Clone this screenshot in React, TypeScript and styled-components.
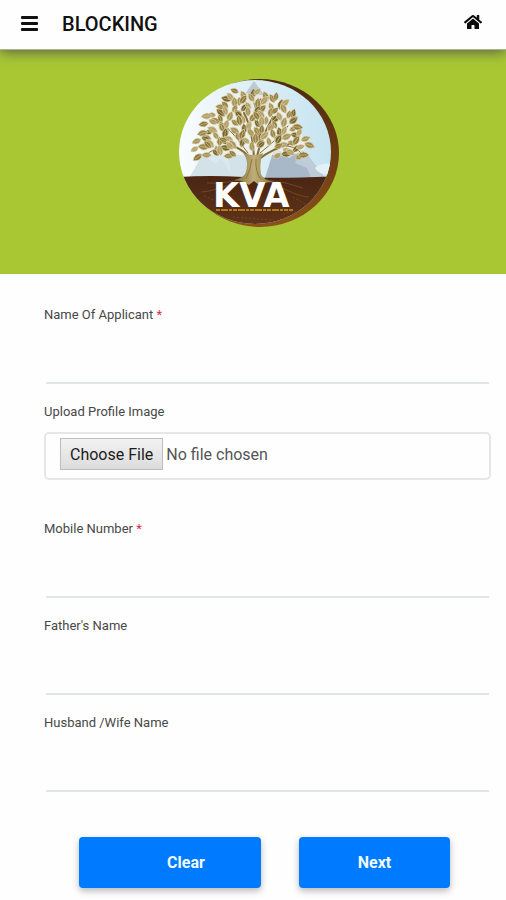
import React from 'react';
import styled, { createGlobalStyle } from 'styled-components';
import { FaHome } from 'react-icons/fa';

const GlobalStyle = createGlobalStyle`
  *, *::before, *::after { box-sizing: border-box; }
  body {
    margin: 0;
    background: #fefefe;
    color: #444;
    font-family: Roboto, "Liberation Sans", sans-serif;
  }
  button, input { font-family: inherit; }
`;

const Header = styled.header`
  position: relative;
  display: flex;
  align-items: center;
  height: 50px;
  padding: 0 24px 2px 20px;
  background: #fefefe;
  border-bottom: 1px solid #a9b58c;
  box-shadow: 0 2px 12px rgba(60, 60, 80, 0.75);
`;

const IconButton = styled.button`
  display: flex;
  padding: 0;
  border: 0;
  background: none;
  color: #111;
  cursor: pointer;
`;

const HomeLink = styled.a`
  display: flex;
  margin-left: auto;
  padding-bottom: 4px;
  color: #0b0b0b;
`;

const Title = styled.h1`
  margin: 0 0 0 23px;
  font-size: 20px;
  line-height: 24px;
  font-weight: 500;
  color: #111;
`;

const Hero = styled.section`
  display: flex;
  justify-content: center;
  padding: 28px 0 45px 12px;
  background: #a9c733;
`;

const Form = styled.form`
  padding: 31px 15px 10px 44px;
`;

const Field = styled.div<{ $gap?: number }>`
  display: flex;
  flex-direction: column;
  margin-bottom: ${({ $gap = 18 }) => $gap}px;
`;

const Label = styled.label`
  font-size: 13px;
  line-height: 20px;
  color: #484848;
`;

const Required = styled.span`
  color: #d9304a;
`;

const TextInput = styled.input`
  height: 59px;
  margin: 0 2px;
  padding: 20px 10px 0;
  border: 0;
  border-bottom: 2px solid #e2e5e7;
  background: transparent;
  font-size: 16px;
  color: #495057;
  outline: none;
  &:focus { border-bottom-color: #007bff; }
`;

const FileInput = styled.input`
  width: 100%;
  height: 48px;
  margin-top: 10px;
  padding: 4px 14px 8px;
  border: 2px solid #e4e6e7;
  border-radius: 5px;
  font-size: 16px;
  line-height: 30px;
  color: #555;

  &::file-selector-button {
    height: 32px;
    margin: 0 3px 0 0;
    padding: 0 9px;
    border: 1px solid #bdbdbd;
    border-radius: 0;
    background: linear-gradient(#f2f2f2, #dcdcdc);
    font-family: inherit;
    font-size: 16px;
    color: #1c1c1c;
  }
`;

const Actions = styled.div`
  display: grid;
  grid-template-columns: 182fr 151fr;
  gap: 38px;
  padding: 27px 41px 0 35px;
`;

const ActionButton = styled.button<{ $inset?: number }>`
  height: 51px;
  padding: 0 0 0 ${({ $inset = 0 }) => $inset}px;
  border: 0;
  border-radius: 4px;
  background: #007bff;
  box-shadow: 0 3px 7px rgba(0, 0, 0, 0.28);
  color: #eefaff;
  font-size: 16px;
  font-weight: 700;
  cursor: pointer;
`;

const MenuIcon = () => (
  <svg width="19" height="18" viewBox="0 0 19 18" aria-hidden="true">
    <g fill="currentColor">
      <rect x="1" y="1" width="17" height="3" rx="1" />
      <rect x="1" y="7" width="17" height="3" rx="1" />
      <rect x="1" y="13" width="17" height="3" rx="1" />
    </g>
  </svg>
);

type Leaf = { x: number; y: number; angle: number; size: number; color: string };

const leafColors = ['#8f7a3a', '#a8945a', '#786428', '#b3a068', '#9a8648'];

// Each row of the canopy: height, left end and right end.
const canopyRows: [number, number, number][] = [
  [16, 58, 86],
  [22, 46, 99],
  [28, 41, 107],
  [34, 33, 112],
  [40, 29, 116],
  [46, 27, 119],
  [52, 28, 120],
  [58, 23, 121],
  [64, 18, 126],
  [70, 17, 129],
  [76, 21, 126],
];

const leaves: Leaf[] = canopyRows.flatMap(([y, left, right], row) => {
  const count = Math.round((right - left) / 7);
  return Array.from({ length: count + 1 }, (_, i) => {
    const seed = row * 17 + i * 11;
    const x = left + ((right - left) * i) / count + ((seed * 7) % 5) - 2;
    const jitterY = y + ((seed * 3) % 7) - 3;
    const radial = (Math.atan2(jitterY - 88, x - 75) * 180) / Math.PI;
    return {
      x,
      y: jitterY,
      angle: radial + ((seed * 13) % 110) - 55,
      size: 1 + (seed % 3) * 0.12,
      color: leafColors[seed % leafColors.length],
    };
  });
}).filter((leaf) => leaf.y < 70 || Math.abs(leaf.x - 75) > 20);

const Logo = () => (
  <svg width="162" height="151" viewBox="-1 0 162 151" role="img" aria-label="KVA">
    <defs>
      <clipPath id="disc">
        <ellipse cx="76" cy="74" rx="76" ry="72" />
      </clipPath>
      <linearGradient id="rim" x1="0" y1="0" x2="0" y2="1">
        <stop offset="0" stopColor="#4a2a10" />
        <stop offset="0.5" stopColor="#6d3c12" />
        <stop offset="1" stopColor="#8a5218" />
      </linearGradient>
      <linearGradient id="sky" x1="0" y1="0" x2="1" y2="0">
        <stop offset="0" stopColor="#fbfdfe" />
        <stop offset="0.35" stopColor="#e3f1f7" />
        <stop offset="1" stopColor="#c3e3f0" />
      </linearGradient>
      <linearGradient id="soil" x1="0" y1="0" x2="0" y2="1">
        <stop offset="0" stopColor="#4a2613" />
        <stop offset="1" stopColor="#62351a" />
      </linearGradient>
      <linearGradient id="trunk" x1="0" y1="0" x2="1" y2="0">
        <stop offset="0" stopColor="#7d6b36" />
        <stop offset="0.5" stopColor="#bfae78" />
        <stop offset="1" stopColor="#85723b" />
      </linearGradient>
    </defs>
    <ellipse cx="81" cy="75" rx="79" ry="74" fill="url(#rim)" />
    <g clipPath="url(#disc)">
      <rect width="162" height="151" fill="url(#sky)" />
      <path d="M66 16 L75 3 L86 18 L98 34 L60 34Z" fill="#bccad4" />
      <path d="M10 100 L24 76 L36 80 L48 73 L66 78 L70 100Z" fill="#d3e1e9" />
      <path d="M24 76 L36 86 L42 80 L52 95 L48 73Z" fill="#dce8ef" />
      <path d="M86 100 L96 68 L110 80 L122 72 L128 76 L146 100Z" fill="#a9b8c8" />
      <path d="M122 72 L116 85 L128 90 L132 100 L146 100 L128 76Z" fill="#bfccd8" />
      <path d="M136 90 Q141 85 151 86 L151 97 Q140 97 136 90Z" fill="#e4f1f7" />
      <path
        d="M19 66 Q24 48 34 31 Q52 12 76 16 Q104 18 116 38 Q122 58 128 66 Q124 80 96 77 H52 Q24 81 19 66Z"
        fill="#f2f1e4"
        opacity="0.75"
      />
      <path d="M0 99 Q30 97 65 99 T162 98 V151 H0Z" fill="url(#soil)" />
      <g stroke="#7a4d2b" strokeWidth="1" fill="none" opacity="0.8">
        <path d="M60 102 Q42 106 28 105 M88 102 Q108 104 124 110 M92 104 Q116 118 130 119 M58 104 Q32 114 22 114" />
        <path d="M114 119 L126 126 M34 122 L24 117 M54 139 L92 142 M104 136 L116 132" strokeDasharray="2 2" />
      </g>
      <g stroke="#826c34" fill="none" strokeLinecap="round">
        <path d="M72 82 Q65 70 43 64 M75 82 Q74 52 65 35 M77 82 Q82 60 94 39 M79 82 Q92 71 113 65" strokeWidth="2" />
        <path d="M69 75 Q57 58 44 45 M81 75 Q100 60 109 48 M51 67 Q34 70 27 77 M103 68 Q116 67 122 75 M75 62 Q82 43 75 25" strokeWidth="1" />
      </g>
      <path
        d="M64 75 Q75 79 84 75 Q80 84 82 96 Q83 101 95 104 Q86 104 80 107 L75 103 L70 107 Q65 103 55 102 Q65 100 67 94 Q70 82 64 75Z"
        fill="url(#trunk)"
      />
      <path d="M73 81 Q71 93 67 101 M77 81 Q76 94 82 101" stroke="#8d7941" fill="none" />
      {leaves.map((leaf, i) => (
        <g key={i} transform={`translate(${leaf.x} ${leaf.y}) rotate(${leaf.angle}) scale(${leaf.size})`}>
          <path d="M-4 0 Q0 -5 5 0 Q0 5 -4 0Z" fill={leaf.color} stroke="#e6dfc3" strokeWidth="0.5" />
          <path d="M-3 0 H3" stroke="#d3c79e" strokeWidth="0.5" />
        </g>
      ))}
      <text x="34" y="129" fill="#fff" fontFamily="'DejaVu Sans', sans-serif" fontWeight="700" fontSize="34">
        KVA
      </text>
      <path d="M37 132 H114" stroke="#b5791d" strokeWidth="2" strokeDasharray="4 1 7 1 3 1" />
    </g>
  </svg>
);

const App = () => (
  <>
    <GlobalStyle />
    <Header>
      <IconButton type="button" aria-label="Menu">
        <MenuIcon />
      </IconButton>
      <Title>BLOCKING</Title>
      <HomeLink href="#home" aria-label="Home">
        <FaHome size={18} />
      </HomeLink>
    </Header>
    <main>
      <Hero>
        <Logo />
      </Hero>
      <Form>
        <Field>
          <Label htmlFor="applicant">
            Name Of Applicant <Required>*</Required>
          </Label>
          <TextInput id="applicant" type="text" required />
        </Field>
        <Field $gap={39}>
          <Label htmlFor="photo">Upload Profile Image</Label>
          <FileInput id="photo" type="file" accept="image/*" />
        </Field>
        <Field>
          <Label htmlFor="mobile">
            Mobile Number <Required>*</Required>
          </Label>
          <TextInput id="mobile" type="tel" required />
        </Field>
        <Field>
          <Label htmlFor="father">Father's Name</Label>
          <TextInput id="father" type="text" />
        </Field>
        <Field>
          <Label htmlFor="spouse">Husband /Wife Name</Label>
          <TextInput id="spouse" type="text" />
        </Field>
        <Actions>
          <ActionButton type="reset" $inset={32}>
            Clear
          </ActionButton>
          <ActionButton type="submit">Next</ActionButton>
        </Actions>
      </Form>
    </main>
  </>
);

export default App;
